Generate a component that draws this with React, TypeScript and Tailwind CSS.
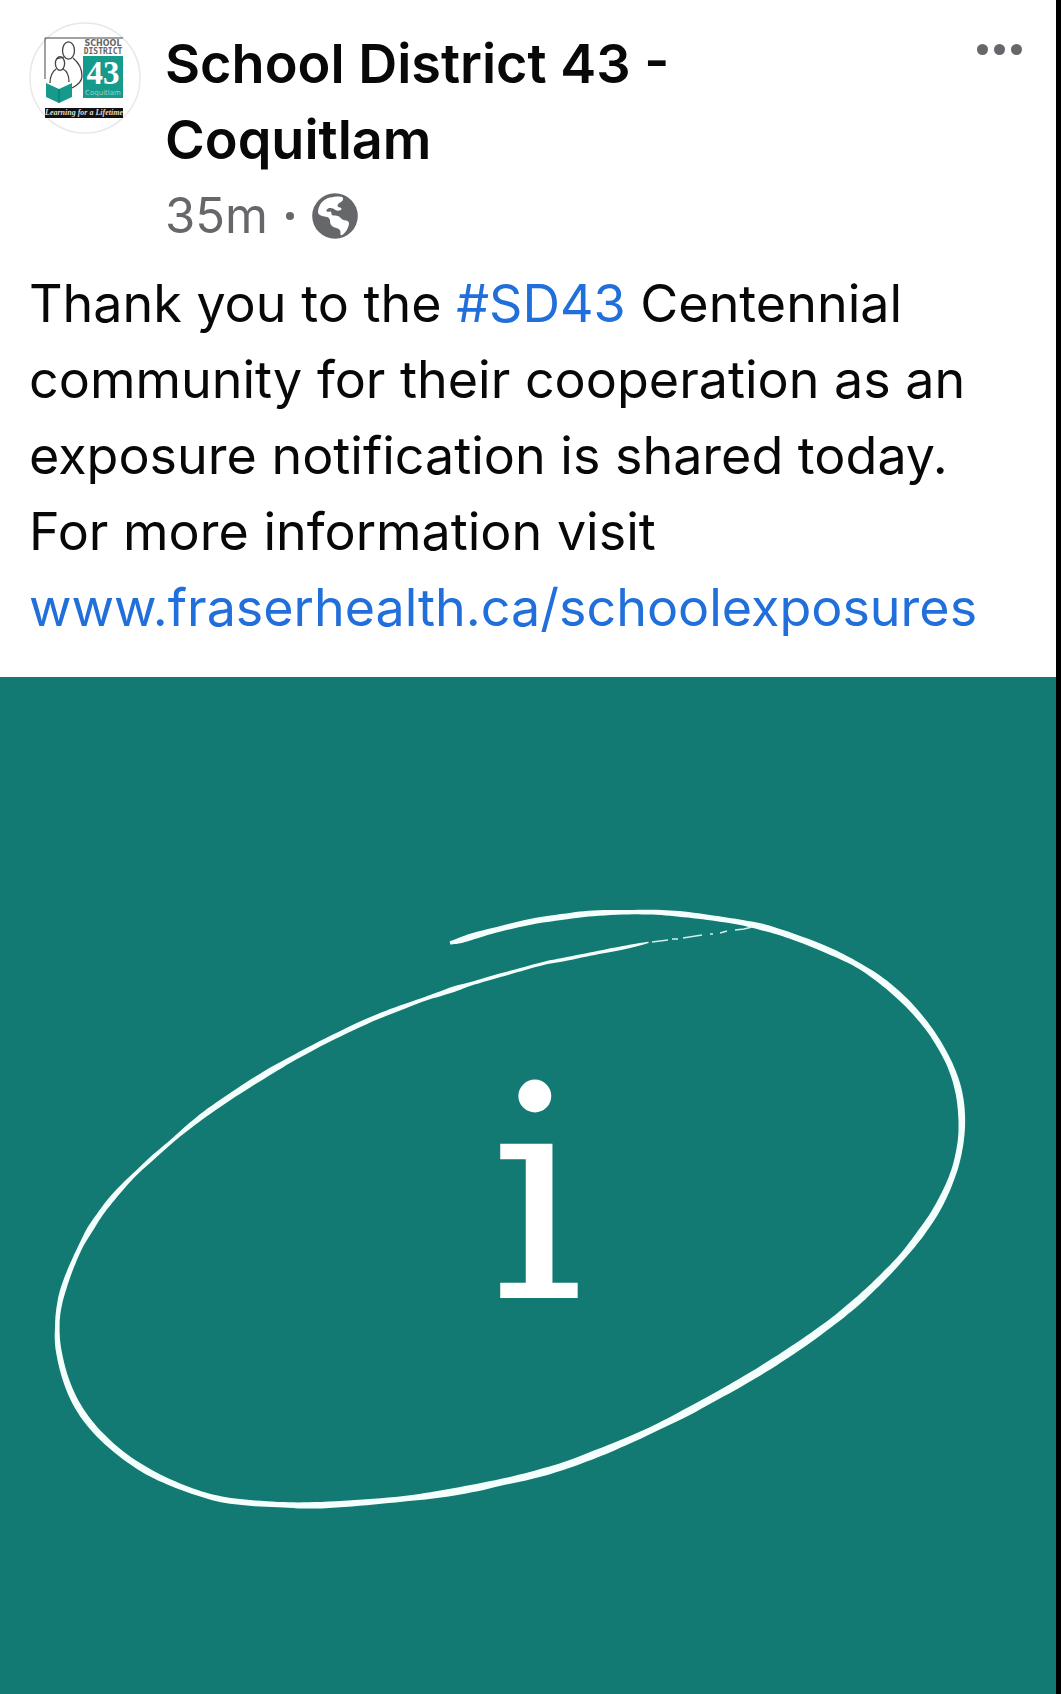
import React from "react";

type BrushPoint = [x: number, y: number, width: number];

// Centre line and thickness of the chalk stroke, clockwise from its first tip.
const STROKE: BrushPoint[] = [
  [450, 943, 3], [459, 941, 6], [473, 936, 7], [492, 931, 5], [530, 921, 6], [570, 916, 6], [590, 913, 6],
  [630, 912, 4], [657, 912, 5], [683, 914, 6], [713, 918, 5], [740, 922, 5], [763, 927, 7],
  [780, 932, 6], [800, 939, 6], [823, 948, 7], [843, 957, 6], [860, 966, 5], [880, 979, 7],
  [905, 1000, 7], [926, 1024, 6], [940, 1045, 6], [952, 1068, 6], [959, 1090, 7], [962, 1113, 7],
  [962, 1137, 6], [957, 1163, 6], [951, 1180, 6], [944, 1196, 7], [934, 1215, 7], [919, 1236, 8],
  [904, 1255, 6], [890, 1270, 7], [873, 1287, 7], [858, 1301, 8], [834, 1321, 7], [805, 1342, 8],
  [767, 1367, 8], [740, 1383, 8], [713, 1398, 7], [686, 1413, 8], [654, 1429, 6],
  [623, 1443, 7], [596, 1454, 8], [565, 1466, 7], [534, 1475, 8], [507, 1481, 6], [471, 1489, 8],
  [436, 1495, 7], [404, 1499, 5], [360, 1503, 6], [311, 1506, 7], [285, 1505, 5], [248, 1503, 6],
  [221, 1500, 6], [197, 1493, 5], [173, 1484, 6], [147, 1472, 7], [120, 1454, 6], [94, 1430, 7],
  [77, 1407, 7], [65, 1380, 6], [57, 1347, 6], [57, 1323, 4], [59, 1305, 5], [63, 1289, 6],
  [71, 1267, 5], [81, 1245, 4], [90, 1229, 7], [100, 1214, 5], [109, 1202, 6], [123, 1186, 5],
  [137, 1172, 3], [150, 1160, 5], [173, 1140, 3], [187, 1128, 5], [207, 1112, 6], [240, 1090, 6],
  [267, 1073, 7], [293, 1058, 5], [333, 1037, 5], [373, 1018, 5], [400, 1008, 5], [427, 998, 3],
  [440, 994, 5], [457, 988, 6], [467, 985, 3], [497, 976, 4], [520, 970, 3], [547, 962, 3],
  [563, 960, 4], [590, 954, 3], [617, 949, 4], [637, 945, 3], [650, 942, 1],
];

function soften(points: BrushPoint[]): BrushPoint[] {
  return points.map((p, i) => {
    const before = points[i - 1];
    const after = points[i + 1];
    if (!before || !after) return p;
    const mix = (k: 0 | 1 | 2) => (before[k] + 4 * p[k] + after[k]) / 6;
    return [mix(0), mix(1), mix(2)];
  });
}

function brushPath(points: BrushPoint[]): string {
  const left: string[] = [];
  const right: string[] = [];
  const steps = 6;
  const at = (i: number) => points[Math.max(0, Math.min(points.length - 1, i))];
  const spline = (k: number, i: number, t: number) => {
    const [a, b, c, d] = [at(i - 1)[k], at(i)[k], at(i + 1)[k], at(i + 2)[k]];
    return 0.5 * (2 * b + (c - a) * t + (2 * a - 5 * b + 4 * c - d) * t * t + (3 * b - a - 3 * c + d) * t * t * t);
  };
  for (let i = 0; i < points.length - 1; i++) {
    for (let s = 0; s < steps; s++) {
      const t = s / steps;
      const x = spline(0, i, t);
      const y = spline(1, i, t);
      const half = spline(2, i, t) / 2;
      const dx = spline(0, i, t + 0.05) - x;
      const dy = spline(1, i, t + 0.05) - y;
      const len = Math.hypot(dx, dy) || 1;
      left.push(`${(x - (dy / len) * half).toFixed(1)} ${(y + (dx / len) * half).toFixed(1)}`);
      right.push(`${(x + (dy / len) * half).toFixed(1)} ${(y - (dx / len) * half).toFixed(1)}`);
    }
  }
  return `M${left.join("L")}L${right.reverse().join("L")}Z`;
}

const STROKE_PATH = brushPath(soften(STROKE));

function DistrictLogo() {
  return (
    <svg viewBox="0 0 112 112" className="size-28 shrink-0" role="img" aria-label="School District 43 logo">
      <circle cx="56" cy="56" r="55" fill="#fff" stroke="#e8e8e8" strokeWidth="1.5" />
      <path d="M16 57V16H94" fill="none" stroke="#444" strokeWidth="1" />
      <g fill="none" stroke="#444" strokeWidth="1.3">
        <ellipse cx="39.5" cy="28.5" rx="6" ry="8.7" />
        <ellipse cx="31" cy="41.5" rx="4.6" ry="6.8" />
        <path d="M35 35C32 36 29 36 28 37M44 36C50 41 53 47 53 54C53 60 49 63 43 66M27 47C23 50 21 55 21 61M34 47C38 49 40 54 40 60" />
      </g>
      <path d="M17 61L30 67L43 61V75L30 81L17 75Z" fill="#159a8c" />
      <path d="M30 67V81" stroke="#0c7368" strokeWidth="1" />
      <rect x="54" y="34" width="40" height="42" fill="#159a8c" />
      <text x="74" y="24" textAnchor="middle" className="font-['DejaVu_Sans'] text-[8px] font-bold" fill="#666">SCHOOL</text>
      <text x="74" y="32" textAnchor="middle" className="font-['DejaVu_Sans_Mono'] text-[8px] font-bold" fill="#666">DISTRICT</text>
      <text x="74" y="62" textAnchor="middle" className="font-['Liberation_Serif'] text-[33px] font-bold" fill="#fff">43</text>
      <text x="74" y="73" textAnchor="middle" className="font-['DejaVu_Sans'] text-[7px]" fill="#8fd3ca">Coquitlam</text>
      <rect x="16" y="86" width="78" height="10" fill="#111" />
      <text x="55" y="93" textAnchor="middle" className="font-['Liberation_Serif'] text-[8px] font-bold italic" fill="#ddd">Learning for a Lifetime</text>
    </svg>
  );
}

function Globe() {
  return (
    <svg viewBox="0 0 46 46" className="size-[46px]" role="img" aria-label="Public">
      <circle cx="23" cy="23" r="22.8" fill="#65676b" />
      <path
        fill="#fff"
        d="M6 20C6 12 11 6 18 4.500C23 3.300 28 3 30 4C32 5 31 8 29 9C27 10 25.500 11 25.500 13C26 15 30 14 29.500 16C29 18 25 18 23.500 17C21 14.500 16 14 14.500 17C14 19 16 19 18 18.500C20 18.500 19 21 20 22C22 23 24 22 27 23.500C29 25 30 27 34 27.500C37 28 37.500 30 36.500 33C35.500 36 34 39 31 41.500C29 43 28 42 28.500 39.500C28.500 36 26 35.500 22.500 34.500C19 33 18 31 18 28C18 25 16 24 12.500 23.500C9 23 7 22 6 20Z"
      />
    </svg>
  );
}

function PostHeader() {
  return (
    <header className="flex items-start gap-6">
      <DistrictLogo />
      <div className="min-w-0 flex-1 pt-1">
        <h1 className="text-[54px] leading-[76px] font-semibold">
          <span className="block">School District 43 -</span>
          <span className="block">Coquitlam</span>
        </h1>
        <div className="flex items-center gap-[18px] text-[49px] leading-[76px] text-[#65676b]">
          <time>35m</time>
          <span className="size-2 rounded-full bg-[#65676b]" />
          <Globe />
        </div>
      </div>
      <button type="button" aria-label="More options" className="mt-[22px] mr-[5px] flex gap-1.5">
        <span className="size-[11px] rounded-full bg-[#65676b]" />
        <span className="size-[11px] rounded-full bg-[#65676b]" />
        <span className="size-[11px] rounded-full bg-[#65676b]" />
      </button>
    </header>
  );
}

function InfoPicture() {
  return (
    <svg viewBox="0 677 1056 1017" className="block w-full bg-[#127a72]" role="img" aria-label="Information">
      <path d={STROKE_PATH} fill="#f4fffd" />
      <path
        d="M652 942L668 940M672 939L678 939M683 938L702 935M710 934L713 934M720 933L727 931M735 930L744 929L752 927"
        fill="none"
        stroke="#d3efeb"
        strokeWidth="1.5"
      />
      <text x="537" y="1298" textAnchor="middle" className="font-['DejaVu_Serif'] text-[297px]" fill="#fff">i</text>
    </svg>
  );
}

export default function App() {
  return (
    <div className="bg-black pr-[5px] font-['Inter',sans-serif] text-[#080809]">
      <article className="bg-white">
        <div className="px-[29px] pt-[22px] pb-[31px]">
          <PostHeader />
          <p className="mt-3 text-[52px] leading-[76px]">
            Thank you to the <a href="#sd43" className="text-[#216fdb]">#SD43</a> Centennial community for their
            cooperation as an exposure notification is shared today. For more information visit{" "}
            <a href="#schoolexposures" className="text-[#216fdb]">www.fraserhealth.ca/schoolexposures</a>
          </p>
        </div>
        <InfoPicture />
      </article>
    </div>
  );
}
